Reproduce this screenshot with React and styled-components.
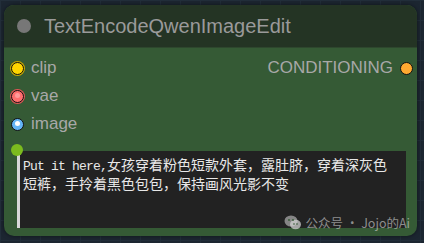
import styled, { createGlobalStyle } from "styled-components"

const Global = createGlobalStyle`
  html, body { margin: 0; padding: 0; background: #1c2631; }
  body { width: 424px; height: 243px; overflow: hidden; }
`

const Canvas = styled.div`
  position: relative;
  width: 424px;
  height: 243px;
  background-color: #1c2631;
  background-image:
    linear-gradient(#222e3a 1px, transparent 1px),
    linear-gradient(90deg, #222e3a 1px, transparent 1px);
  background-size: 20px 20px;
  padding: 5px 0 0 4px;
  box-sizing: border-box;
  overflow: hidden;
`

const Node = styled.div`
  position: relative;
  width: 413px;
  height: 231px;
  background: #355a35;
  border-radius: 10px;
  display: flex;
  flex-direction: column;
  font-family: "Liberation Sans", Arial, sans-serif;
  box-shadow: 0 0 4px rgba(0,0,0,0.5);
`

const Title = styled.div`
  height: 42px;
  background: #243424;
  border-radius: 10px 10px 0 0;
  display: flex;
  align-items: center;
  gap: 13px;
  padding-left: 13px;
  color: #9a9a9a;
  font-size: 20px;
  border-bottom: 1px solid #2e472e;
`

const TitleDot = styled.span`
  width: 14px;
  height: 14px;
  border-radius: 50%;
  background: #777;
`

const Slots = styled.div`
  display: grid;
  grid-template-columns: 1fr auto;
  padding: 11px 4px 0 7px;
  row-gap: 10px;
`

const Slot = styled.div`
  display: flex;
  align-items: center;
  gap: 7px;
  height: 18px;
  color: #a8a8a8;
  font-size: 17px;
  justify-content: ${p => (p.$right ? "flex-end" : "flex-start")};
`

const Dot = styled.span`
  box-sizing: border-box;
  width: 13px;
  height: 13px;
  border-radius: 50%;
  background: ${p => p.$color};
  border: 1.5px solid #111;
  box-shadow: ${p => (p.$ring ? `0 0 0 1px ${p.$ring}` : "none")};
  position: relative;
  &::after {
    content: "";
    display: ${p => (p.$inner ? "block" : "none")};
    position: absolute;
    left: 2.5px;
    top: 2.5px;
    width: 5px;
    height: 5px;
    border-radius: 50%;
    background: ${p => p.$inner};
  }
`

const Prompt = styled.div`
  position: relative;
  margin: 18px 11px 0 13px;
  height: 72px;
  background: #222;
  border-left: 3px solid #d8d8d8;
  padding: 5px 14px 0 3px;
  color: #e8e8e8;
  font-family: "Noto Sans CJK SC", sans-serif;
  font-size: 14px;
  line-height: 16px;
`

const Latin = styled.span`
  font-family: "Liberation Mono", monospace;
  font-size: 13px;
  letter-spacing: -0.8px;
`

const WidgetDot = styled.span`
  position: absolute;
  left: -9px;
  top: -7px;
  width: 12px;
  height: 12px;
  border-radius: 50%;
  background: #7cbb1e;
`

const Watermark = styled.div`
  position: absolute;
  right: 7px;
  bottom: 4px;
  display: flex;
  align-items: center;
  gap: 4px;
  color: rgba(215, 215, 215, 0.6);
  font-family: "Noto Sans CJK SC", sans-serif;
  font-size: 12.5px;
`

function WeChat() {
  return (
    <svg width="18" height="15" viewBox="0 0 18 15">
      <ellipse cx="7" cy="6" rx="6.5" ry="5.5" fill="rgba(200,200,200,0.6)" />
      <ellipse cx="11.5" cy="9.5" rx="5.5" ry="4.8" fill="rgba(210,210,210,0.75)" />
      <circle cx="5" cy="5" r="0.9" fill="#355a35" />
      <circle cx="9" cy="5" r="0.9" fill="#355a35" />
      <circle cx="10" cy="9" r="0.8" fill="#355a35" />
      <circle cx="13" cy="9" r="0.8" fill="#355a35" />
    </svg>
  )
}

export default function App() {
  return (
    <Canvas>
      <Global />
      <Node>
        <Title>
          <TitleDot />
          TextEncodeQwenImageEdit
        </Title>
        <Slots>
          <Slot><Dot $color="#ffd500" $ring="#c8a800" />clip</Slot>
          <Slot $right>CONDITIONING<Dot $color="#ffa931" /></Slot>
          <Slot><Dot $color="#ff6e6e" $ring="#e05555" $inner="#ff9a9a" />vae</Slot>
          <span />
          <Slot><Dot $color="#64b5f6" $inner="#ffffff" />image</Slot>
          <span />
        </Slots>
        <Prompt>
          <WidgetDot />
          <Latin>Put it here,</Latin>女孩穿着粉色短款外套，露肚脐，穿着深灰色短裤，手拎着黑色包包，保持画风光影不变
        </Prompt>
        <Watermark><WeChat />公众号 · Jojo的Ai</Watermark>
      </Node>
    </Canvas>
  )
}
